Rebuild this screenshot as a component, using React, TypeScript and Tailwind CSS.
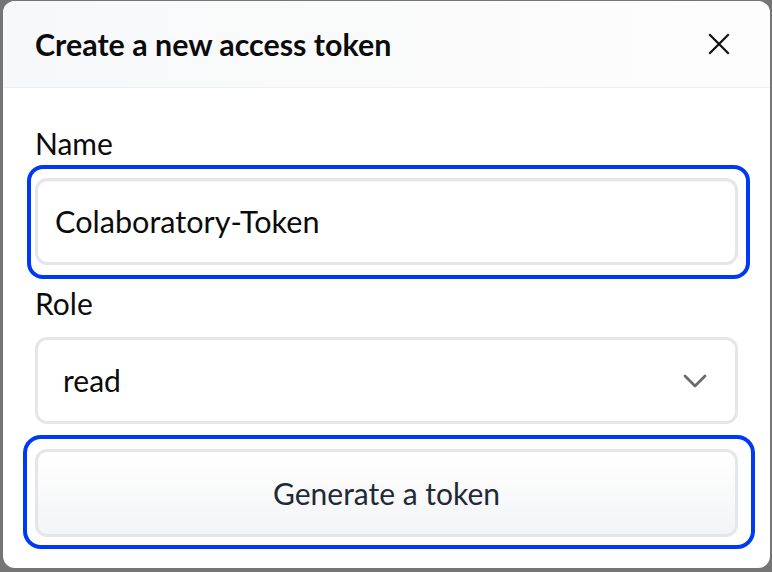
import React from "react";

export default function App() {
  return (
    <div className="w-[772px] h-[572px] bg-[#757575] pt-[1px] pl-[3px]" style={{ fontFamily: 'Lato, "Noto Sans", sans-serif' }}>
      <div className="w-[767px] h-[567px] rounded-[12px] bg-white overflow-hidden flex flex-col">
        <div className="h-[87px] shrink-0 bg-gradient-to-r from-[#f7f8f9] to-[#fdfdfd] border-b border-[#eeeff1] flex items-center justify-between pl-[32px] pr-[40px]">
          <h2 className="text-[30.4px] leading-[36px] font-bold text-[#0b0b0b]">Create a new access token</h2>
          <svg width="22" height="22" viewBox="0 0 22 22" fill="none" stroke="#111" strokeWidth="2.2" strokeLinecap="square">
            <path d="M2 2 L20 20 M20 2 L2 20" />
          </svg>
        </div>
        <div className="flex flex-col pl-[32px] pt-[37px]">
          <label className="text-[30px] leading-[36px] text-[#0b0b0b]">Name</label>
          <div className="mt-[4px] -ml-[8px] w-[723px] rounded-[16px] border-[4px] border-[#0039f5] pl-[4px] pt-[9px] pb-[10px]">
            <div className="w-[703px] h-[87px] rounded-[12px] border-[3px] border-[#e5e6e9] bg-white flex items-center pl-[17px] shadow-[inset_0_1px_2px_rgba(0,0,0,0.04)]">
              <span className="text-[30.6px] text-[#0b0b0b]">Colaboratory-Token</span>
            </div>
          </div>
          <label className="mt-[6px] text-[30px] leading-[36px] text-[#0b0b0b]">Role</label>
          <div className="mt-[16px] w-[703px] h-[87px] rounded-[12px] border-[3px] border-[#e5e6e9] bg-white flex items-center justify-between pl-[25px] pr-[28px]">
            <span className="text-[30px] text-[#0b0b0b]">read</span>
            <svg width="24" height="14" viewBox="0 0 24 14" fill="none" stroke="#6b6b6b" strokeWidth="2.8" strokeLinecap="round" strokeLinejoin="round">
              <path d="M2 2 L12 12 L22 2" />
            </svg>
          </div>
          <div className="mt-[11px] -ml-[12px] w-[732px] rounded-[18px] border-[4px] border-[#0039f5] pl-[8px] pt-[10px] pb-[8px]">
            <div className="w-[703px] h-[88px] rounded-[12px] border-[3px] border-[#e5e6e9] bg-gradient-to-b from-white to-[#f3f4f6] flex items-center justify-center">
              <span className="text-[30px] text-[#1f2937]">Generate a token</span>
            </div>
          </div>
        </div>
      </div>
    </div>
  );
}
